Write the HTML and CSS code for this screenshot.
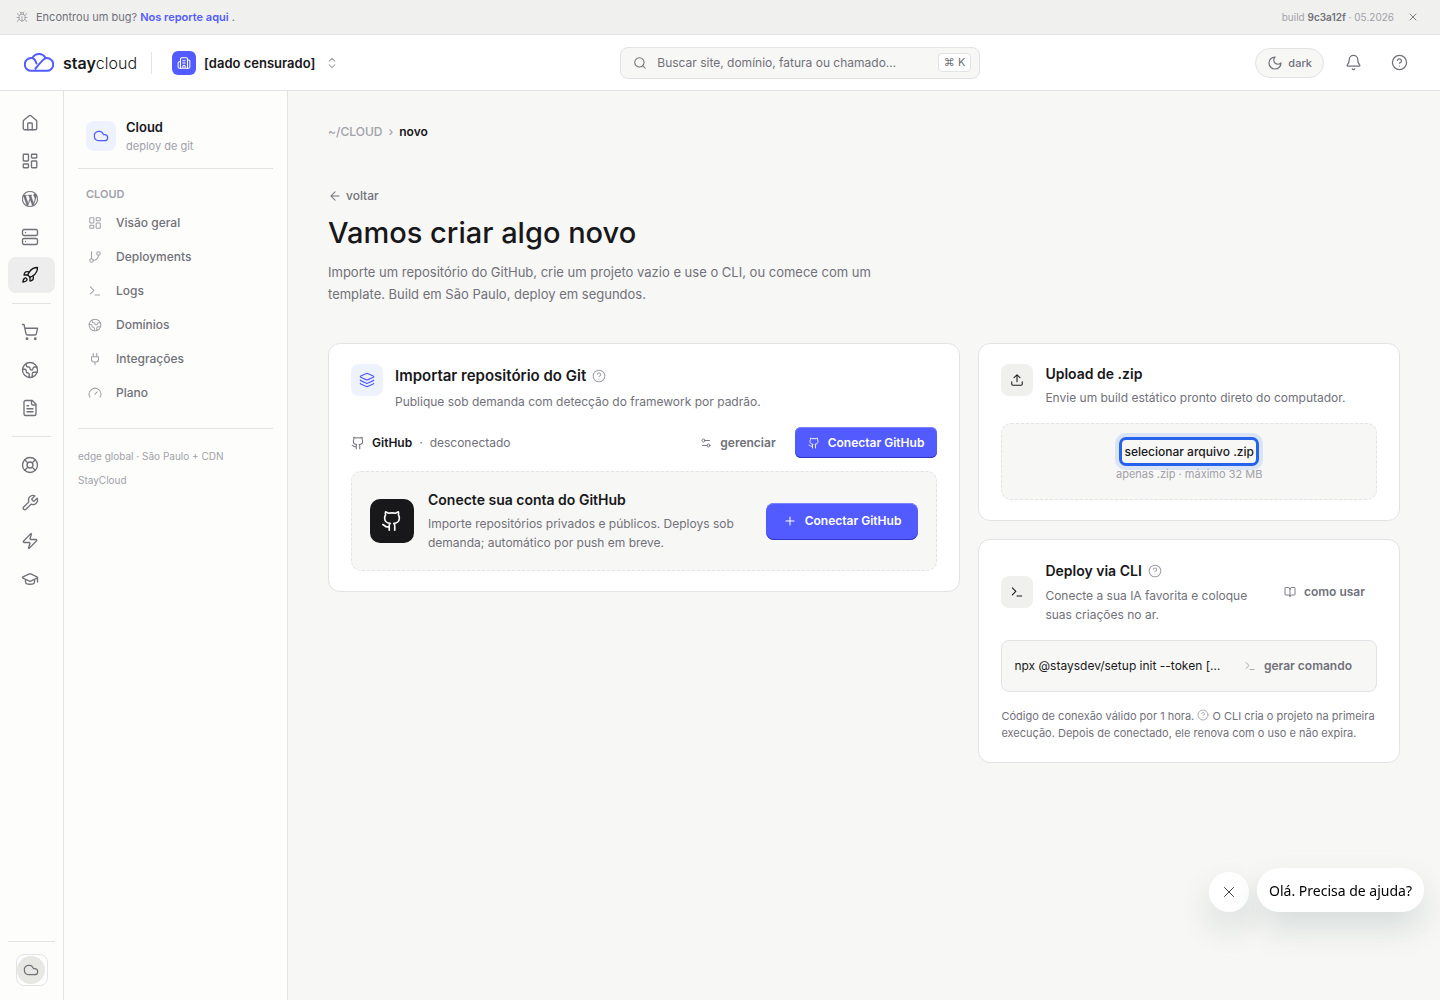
FILE: index.html
```html
<!DOCTYPE html>
<html lang="pt-BR">
	<head>
		<meta charset="UTF-8">
		<meta name="viewport" content="width=device-width, initial-scale=1.0">
		<title>StayCloud</title>
		<link rel="stylesheet" href="styles.css">
	</head>
	<body>
		<!-- icon sprite -->
		<svg class="sprite" aria-hidden="true">
			<symbol id="i-bug" viewBox="0 0 24 24"><path d="m8 2 1.88 1.88M14.12 3.88 16 2M9 7.13v-1a3.003 3.003 0 1 1 6 0v1"/><path d="M12 20c-3.3 0-6-2.7-6-6v-3a4 4 0 0 1 4-4h4a4 4 0 0 1 4 4v3c0 3.3-2.7 6-6 6M12 20v-9M6.53 9C4.6 8.8 3 7.1 3 5M6 13H2M3 21c0-2.1 1.7-3.9 3.8-4M20.97 5c0 2.1-1.6 3.8-3.5 4M22 13h-4M17.2 17c2.1.1 3.8 1.9 3.8 4"/></symbol>
			<symbol id="i-x" viewBox="0 0 24 24"><path d="M18 6 6 18M6 6l12 12"/></symbol>
			<symbol id="i-building" viewBox="0 0 24 24"><path d="M10 12h4M10 8h4M14 21v-3a2 2 0 0 0-4 0v3M6 10H4a2 2 0 0 0-2 2v7a2 2 0 0 0 2 2h16a2 2 0 0 0 2-2V9a2 2 0 0 0-2-2h-2"/><path d="M6 21V5a2 2 0 0 1 2-2h8a2 2 0 0 1 2 2v16"/></symbol>
			<symbol id="i-updown" viewBox="0 0 24 24"><path d="m7 15 5 5 5-5M7 9l5-5 5 5"/></symbol>
			<symbol id="i-search" viewBox="0 0 24 24"><circle cx="11" cy="11" r="8"/><path d="m21 21-4.34-4.34"/></symbol>
			<symbol id="i-moon" viewBox="0 0 24 24"><path d="M12 3a6 6 0 0 0 9 9 9 9 0 1 1-9-9"/></symbol>
			<symbol id="i-bell" viewBox="0 0 24 24"><path d="M10.268 21a2 2 0 0 0 3.464 0M3.262 15.326A1 1 0 0 0 4 17h16a1 1 0 0 0 .74-1.673C19.41 13.956 18 12.499 18 8A6 6 0 0 0 6 8c0 4.499-1.411 5.956-2.738 7.326"/></symbol>
			<symbol id="i-help" viewBox="0 0 24 24"><circle cx="12" cy="12" r="10"/><path d="M9.09 9a3 3 0 0 1 5.83 1c0 2-3 3-3 3M12 17h.01"/></symbol>
			<symbol id="i-home" viewBox="0 0 24 24"><path d="M15 21v-8a1 1 0 0 0-1-1h-4a1 1 0 0 0-1 1v8"/><path d="M3 10a2 2 0 0 1 .709-1.528l7-6a2 2 0 0 1 2.582 0l7 6A2 2 0 0 1 21 10v9a2 2 0 0 1-2 2H5a2 2 0 0 1-2-2z"/></symbol>
			<symbol id="i-dash" viewBox="0 0 24 24"><rect width="7" height="9" x="3" y="3" rx="1"/><rect width="7" height="5" x="14" y="3" rx="1"/><rect width="7" height="9" x="14" y="12" rx="1"/><rect width="7" height="5" x="3" y="16" rx="1"/></symbol>
			<symbol id="i-wp" viewBox="0 0 24 24"><path fill="currentColor" stroke="currentColor" stroke-width=".5" d="M21.469 6.825c.84 1.537 1.318 3.3 1.318 5.175 0 3.979-2.156 7.456-5.363 9.325l3.295-9.527c.615-1.54.82-2.771.82-3.864 0-.405-.026-.78-.07-1.11m-7.981.105c.647-.03 1.232-.105 1.232-.105.582-.075.514-.93-.067-.899 0 0-1.755.135-2.88.135-1.064 0-2.85-.15-2.85-.15-.585-.03-.661.855-.075.885 0 0 .54.061 1.125.09l1.68 4.605-2.37 7.08L5.354 6.9c.649-.03 1.234-.1 1.234-.1.585-.075.516-.93-.065-.896 0 0-1.746.138-2.874.138-.2 0-.438-.008-.69-.015C4.911 3.15 8.235 1.215 12 1.215c2.809 0 5.365 1.072 7.286 2.833-.046-.003-.091-.009-.141-.009-1.06 0-1.812.923-1.812 1.914 0 .89.513 1.643 1.06 2.531.411.72.89 1.643.89 2.977 0 .915-.354 1.994-.821 3.479l-1.075 3.585-3.9-11.61.001.014zM12 22.784c-1.059 0-2.081-.153-3.048-.437l3.237-9.406 3.315 9.087c.024.053.05.101.078.149-1.12.393-2.325.609-3.582.609M1.211 12c0-1.564.336-3.05.935-4.39L7.29 21.709C3.694 19.96 1.212 16.271 1.211 12M12 0C5.385 0 0 5.385 0 12s5.385 12 12 12 12-5.385 12-12S18.615 0 12 0"/></symbol>
			<symbol id="i-server" viewBox="0 0 24 24"><rect width="20" height="8" x="2" y="2" rx="2"/><rect width="20" height="8" x="2" y="14" rx="2"/><path d="M6 6h.01M6 18h.01"/></symbol>
			<symbol id="i-rocket" viewBox="0 0 24 24"><path d="M4.5 16.5c-1.5 1.26-2 5-2 5s3.74-.5 5-2c.71-.84.7-2.13-.09-2.91a2.18 2.18 0 0 0-2.91-.09zM12 15l-3-3a22 22 0 0 1 2-3.95A12.88 12.88 0 0 1 22 2c0 2.72-.78 7.5-6 11a22.35 22.35 0 0 1-4 2z"/><path d="M9 12H4s.55-3.03 2-4c1.62-1.08 5 0 5 0M12 15v5s3.03-.55 4-2c1.08-1.62 0-5 0-5"/></symbol>
			<symbol id="i-cart" viewBox="0 0 24 24"><circle cx="8" cy="21" r="1"/><circle cx="19" cy="21" r="1"/><path d="M2.05 2.05h2l2.66 12.42a2 2 0 0 0 2 1.58h9.78a2 2 0 0 0 1.95-1.57l1.65-7.43H5.12"/></symbol>
			<symbol id="i-earth" viewBox="0 0 24 24"><path d="M21.54 15H17a2 2 0 0 0-2 2v4.54M7 3.34V5a3 3 0 0 0 3 3 2 2 0 0 1 2 2c0 1.1.9 2 2 2a2 2 0 0 0 2-2c0-1.1.9-2 2-2h3.17M11 21.95V18a2 2 0 0 0-2-2 2 2 0 0 1-2-2v-1a2 2 0 0 0-2-2H2.05"/><circle cx="12" cy="12" r="10"/></symbol>
			<symbol id="i-file" viewBox="0 0 24 24"><path d="M15 2H6a2 2 0 0 0-2 2v16a2 2 0 0 0 2 2h12a2 2 0 0 0 2-2V7Z"/><path d="M14 2v4a2 2 0 0 0 2 2h4M10 9H8M16 13H8M16 17H8"/></symbol>
			<symbol id="i-buoy" viewBox="0 0 24 24"><circle cx="12" cy="12" r="10"/><path d="m4.93 4.93 4.24 4.24M14.83 9.17l4.24-4.24M14.83 14.83l4.24 4.24M9.17 14.83l-4.24 4.24"/><circle cx="12" cy="12" r="4"/></symbol>
			<symbol id="i-wrench" viewBox="0 0 24 24"><path d="M14.7 6.3a1 1 0 0 0 0 1.4l1.6 1.6a1 1 0 0 0 1.4 0l3.77-3.77a6 6 0 0 1-7.94 7.94l-6.91 6.91a2.12 2.12 0 0 1-3-3l6.91-6.91a6 6 0 0 1 7.94-7.94l-3.76 3.76z"/></symbol>
			<symbol id="i-zap" viewBox="0 0 24 24"><path d="M4 14a1 1 0 0 1-.78-1.63l9.9-10.2a.5.5 0 0 1 .86.46l-1.92 6.02A1 1 0 0 0 13 10h7a1 1 0 0 1 .78 1.63l-9.9 10.2a.5.5 0 0 1-.86-.46l1.92-6.02A1 1 0 0 0 11 14z"/></symbol>
			<symbol id="i-grad" viewBox="0 0 24 24"><path d="M21.42 10.922a1 1 0 0 0-.019-1.838L12.83 5.18a2 2 0 0 0-1.66 0L2.6 9.08a1 1 0 0 0 0 1.832l8.57 3.908a2 2 0 0 0 1.66 0zM22 10v6M6 12.5V16a6 3 0 0 0 12 0v-3.5"/></symbol>
			<symbol id="i-cloud" viewBox="0 0 24 24"><path d="M17.5 19H9a7 7 0 1 1 6.71-9h1.79a4.5 4.5 0 1 1 0 9Z"/></symbol>
			<symbol id="i-branch" viewBox="0 0 24 24"><path d="M6 3v12"/><circle cx="18" cy="6" r="3"/><circle cx="6" cy="18" r="3"/><path d="M18 9a9 9 0 0 1-9 9"/></symbol>
			<symbol id="i-term" viewBox="0 0 24 24"><path d="M12 19h8M4 17l6-6-6-6"/></symbol>
			<symbol id="i-plug" viewBox="0 0 24 24"><path d="M12 22v-5M9 8V2M15 8V2M18 8v5a4 4 0 0 1-4 4h-4a4 4 0 0 1-4-4V8Z"/></symbol>
			<symbol id="i-gauge" viewBox="0 0 24 24"><path d="m12 14 4-4M3.34 19a10 10 0 1 1 17.32 0"/></symbol>
			<symbol id="i-left" viewBox="0 0 24 24"><path d="m12 19-7-7 7-7M19 12H5"/></symbol>
			<symbol id="i-layers" viewBox="0 0 24 24"><path d="M12.83 2.18a2 2 0 0 0-1.66 0L2.6 6.08a1 1 0 0 0 0 1.83l8.58 3.91a2 2 0 0 0 1.66 0l8.58-3.9a1 1 0 0 0 0-1.83zM2 12a1 1 0 0 0 .58.91l8.6 3.91a2 2 0 0 0 1.65 0l8.58-3.9A1 1 0 0 0 22 12M2 17a1 1 0 0 0 .58.91l8.6 3.91a2 2 0 0 0 1.65 0l8.58-3.9A1 1 0 0 0 22 17"/></symbol>
			<symbol id="i-github" viewBox="0 0 24 24"><path d="M15 22v-4a4.8 4.8 0 0 0-1-3.5c3 0 6-2 6-5.5.08-1.25-.27-2.48-1-3.5.28-1.15.28-2.35 0-3.5 0 0-1 0-3 1.5-2.64-.5-5.36-.5-8 0C6 2 5 2 5 2c-.3 1.15-.3 2.35 0 3.5A5.403 5.403 0 0 0 4 9c0 3.5 3 5.5 6 5.5-.39.49-.68 1.05-.85 1.65S8.93 17.38 9 18v4M9 18c-4.51 2-5-2-7-2"/></symbol>
			<symbol id="i-sliders" viewBox="0 0 24 24"><path d="M14 17H5M19 7h-9"/><circle cx="17" cy="17" r="3"/><circle cx="7" cy="7" r="3"/></symbol>
			<symbol id="i-plus" viewBox="0 0 24 24"><path d="M5 12h14M12 5v14"/></symbol>
			<symbol id="i-upload" viewBox="0 0 24 24"><path d="M12 3v12M17 8l-5-5-5 5M21 15v4a2 2 0 0 1-2 2H5a2 2 0 0 1-2-2v-4"/></symbol>
			<symbol id="i-book" viewBox="0 0 24 24"><path d="M12 7v14M3 18a1 1 0 0 1-1-1V4a1 1 0 0 1 1-1h5a4 4 0 0 1 4 4 4 4 0 0 1 4-4h5a1 1 0 0 1 1 1v13a1 1 0 0 1-1 1h-6a3 3 0 0 0-3 3 3 3 0 0 0-3-3z"/></symbol>
		</svg>

		<div class="banner">
			<svg class="icon s12 faint"><use href="#i-bug"/></svg>
			<p>Encontrou um bug? <a href="#">Nos reporte aqui</a> .</p>
			<span class="build">build <b>9c3a12f</b> · 05.2026</span>
			<button class="plain" aria-label="Fechar"><svg class="icon s12"><use href="#i-x"/></svg></button>
		</div>

		<header class="header">
			<div class="header-left">
				<a class="logo" href="#">
					<svg class="logo-mark" viewBox="0 0 30 19"><path d="M12.500 10.500C11.500 7 10 5 7.200 5a6.400 6.400 0 0 0 0 12.800H22.800a6.400 6.400 0 0 0 0-12.800C20.500 5 19 6.500 11.500 15.500M8.500 5C10 2 12.300 1 15 1s5 1 6.500 4"/></svg>
					<span><b>stay</b>cloud</span>
				</a>
				<button class="team plain">
					<span class="team-icon"><svg class="icon s14"><use href="#i-building"/></svg></span>
					[dado censurado]
					<svg class="icon s14 faint"><use href="#i-updown"/></svg>
				</button>
			</div>
			<label class="search">
				<svg class="icon s14"><use href="#i-search"/></svg>
				<input type="text" aria-label="Buscar" placeholder="Buscar site, domínio, fatura ou chamado…">
				<kbd>⌘ K</kbd>
			</label>
			<div class="header-right">
				<button class="theme"><svg class="icon s16"><use href="#i-moon"/></svg>dark</button>
				<button class="round plain" aria-label="Notificações"><svg class="icon s17"><use href="#i-bell"/></svg></button>
				<button class="round plain" aria-label="Ajuda"><svg class="icon s17"><use href="#i-help"/></svg></button>
			</div>
		</header>

		<div class="shell">
			<nav class="rail" aria-label="Principal">
				<a href="#" aria-label="Início"><svg class="icon s18"><use href="#i-home"/></svg></a>
				<a href="#" aria-label="Painel"><svg class="icon s18"><use href="#i-dash"/></svg></a>
				<a href="#" aria-label="WordPress"><svg class="icon s16"><use href="#i-wp"/></svg></a>
				<a href="#" aria-label="Servidores"><svg class="icon s18"><use href="#i-server"/></svg></a>
				<a href="#" class="active" aria-label="Cloud"><svg class="icon s18"><use href="#i-rocket"/></svg></a>
				<hr>
				<a href="#" aria-label="Loja"><svg class="icon s18"><use href="#i-cart"/></svg></a>
				<a href="#" aria-label="Domínios"><svg class="icon s18"><use href="#i-earth"/></svg></a>
				<a href="#" aria-label="Faturas"><svg class="icon s18"><use href="#i-file"/></svg></a>
				<hr>
				<a href="#" aria-label="Suporte"><svg class="icon s18"><use href="#i-buoy"/></svg></a>
				<a href="#" aria-label="Ferramentas"><svg class="icon s18"><use href="#i-wrench"/></svg></a>
				<a href="#" aria-label="Automação"><svg class="icon s18"><use href="#i-zap"/></svg></a>
				<a href="#" aria-label="Academia"><svg class="icon s18"><use href="#i-grad"/></svg></a>
				<div class="rail-foot">
					<button class="avatar" aria-label="Conta"><span><svg class="icon s16"><use href="#i-cloud"/></svg></span></button>
				</div>
			</nav>

			<aside class="side">
				<div class="side-head">
					<span class="tile blue s30"><svg class="icon s16"><use href="#i-cloud"/></svg></span>
					<div>
						<strong>Cloud</strong>
						<small>deploy de git</small>
					</div>
				</div>
				<nav class="side-nav" aria-label="Cloud">
					<h2>CLOUD</h2>
					<a href="#"><svg class="icon s14"><use href="#i-dash"/></svg>Visão geral</a>
					<a href="#"><svg class="icon s14"><use href="#i-branch"/></svg>Deployments</a>
					<a href="#"><svg class="icon s14"><use href="#i-term"/></svg>Logs</a>
					<a href="#"><svg class="icon s14"><use href="#i-earth"/></svg>Domínios</a>
					<a href="#"><svg class="icon s14"><use href="#i-plug"/></svg>Integrações</a>
					<a href="#"><svg class="icon s14"><use href="#i-gauge"/></svg>Plano</a>
				</nav>
				<div class="side-foot">
					<p>edge global · São Paulo + CDN</p>
					<p>StayCloud</p>
				</div>
			</aside>

			<main class="main">
				<div class="crumbs"><a href="#">~/CLOUD</a><span>›</span><b>novo</b></div>
				<a class="back" href="#"><svg class="icon s14"><use href="#i-left"/></svg>voltar</a>
				<h1>Vamos criar algo novo</h1>
				<p class="lead">Importe um repositório do GitHub, crie um projeto vazio e use o CLI, ou comece com um template. Build em São Paulo, deploy em segundos.</p>

				<div class="grid">
					<section class="card">
						<div class="card-head">
							<span class="tile blue"><svg class="icon s16"><use href="#i-layers"/></svg></span>
							<div class="card-text">
								<h2 class="big">Importar repositório do Git <svg class="icon s14 faint"><use href="#i-help"/></svg></h2>
								<p>Publique sob demanda com detecção do framework por padrão.</p>
							</div>
						</div>
						<div class="provider">
							<svg class="icon s14"><use href="#i-github"/></svg>
							<b>GitHub</b><i>·</i><span>desconectado</span>
							<button class="ghost"><svg class="icon s12"><use href="#i-sliders"/></svg>gerenciar</button>
							<button class="primary small"><svg class="icon s12"><use href="#i-github"/></svg>Conectar GitHub</button>
						</div>
						<div class="connect dashed">
							<span class="gh-tile"><svg class="icon s22"><use href="#i-github"/></svg></span>
							<div class="card-text">
								<h2>Conecte sua conta do GitHub</h2>
								<p>Importe repositórios privados e públicos. Deploys sob demanda; automático por push em breve.</p>
							</div>
							<button class="primary"><svg class="icon s14"><use href="#i-plus"/></svg>Conectar GitHub</button>
						</div>
					</section>

					<div class="stack">
						<section class="card">
							<div class="card-head">
								<span class="tile"><svg class="icon s14"><use href="#i-upload"/></svg></span>
								<div class="card-text">
									<h2>Upload de .zip</h2>
									<p>Envie um build estático pronto direto do computador.</p>
								</div>
							</div>
							<div class="drop dashed">
								<button class="pick">selecionar arquivo .zip</button>
								<small>apenas .zip · máximo 32 MB</small>
							</div>
						</section>

						<section class="card">
							<div class="card-head center">
								<span class="tile"><svg class="icon s14"><use href="#i-term"/></svg></span>
								<div class="card-text">
									<h2>Deploy via CLI <svg class="icon s14 faint"><use href="#i-help"/></svg></h2>
									<p>Conecte a sua IA favorita e coloque suas criações no ar.</p>
								</div>
								<button class="ghost"><svg class="icon s12"><use href="#i-book"/></svg>como usar</button>
							</div>
							<div class="command">
								<code>npx @staysdev/setup init --token […</code>
								<button class="ghost"><svg class="icon s12 faint"><use href="#i-term"/></svg>gerar comando</button>
							</div>
							<p class="note">Código de conexão válido por 1 hora. <svg class="icon s12 faint"><use href="#i-help"/></svg> O CLI cria o projeto na primeira execução. Depois de conectado, ele renova com o uso e não expira.</p>
						</section>
					</div>
				</div>
			</main>
		</div>

		<div class="chat">
			<button class="chat-close" aria-label="Fechar chat"><svg class="icon s18"><use href="#i-x"/></svg></button>
			<button class="chat-msg">Olá. Precisa de ajuda?</button>
		</div>
	</body>
</html>
```
FILE: styles.css
```css
* {
	margin: 0;
	padding: 0;
	box-sizing: border-box;
}

:root {
	--ink: #18181b;
	--muted: #71717a;
	--faint: #a1a1aa;
	--line: #e2e3e5;
	--bg: #f7f7f5;
	--panel: #fdfdfb;
	--soft: #f0f0ee;
	--accent: #525bff;
}

body {
	min-height: 100vh;
	display: flex;
	flex-direction: column;
	background-color: var(--bg);
	color: var(--ink);
	font: 12px/18px Inter, "Liberation Sans", sans-serif;
}

a {
	color: inherit;
	text-decoration: none;
}

button {
	font: inherit;
	color: inherit;
	cursor: pointer;
	border: 0;
	background: none;
}

.sprite {
	display: none;
}

.icon {
	flex: none;
	fill: none;
	stroke: currentColor;
	stroke-width: 1.8;
	stroke-linecap: round;
	stroke-linejoin: round;
}

.s12 { width: 12px; height: 12px; }
.s14 { width: 14px; height: 14px; }
.s16 { width: 16px; height: 16px; }
.s17 { width: 17px; height: 17px; }
.s18 { width: 18px; height: 18px; }
.s22 { width: 22px; height: 22px; }

.faint {
	color: var(--faint);
}

.plain {
	display: flex;
	align-items: center;
}

/* top banner */
.banner {
	height: 35px;
	padding: 0 21px 0 16px;
	display: flex;
	align-items: center;
	gap: 8px;
	background-color: var(--soft);
	border-bottom: 1px solid var(--line);
	font-size: 11px;
	color: var(--muted);
}

.banner a {
	color: var(--accent);
	font-weight: 600;
}

.build {
	margin-left: auto;
	font-size: 10px;
	color: var(--faint);
}

.build b {
	color: var(--muted);
	font-weight: 600;
}

.banner button {
	margin-left: 5px;
}

/* header */
.header {
	height: 56px;
	padding: 0 24px;
	display: flex;
	align-items: center;
	justify-content: space-between;
	background-color: #fff;
	border-bottom: 1px solid var(--line);
}

.header-left,
.header-right {
	display: flex;
	align-items: center;
}

.logo {
	display: flex;
	align-items: center;
	gap: 9px;
	height: 22px;
	padding-right: 14px;
	border-right: 1px solid var(--line);
	font-size: 16px;
}

.logo b {
	font-weight: 600;
}

.logo span {
	font-weight: 300;
}

.logo-mark {
	width: 30px;
	height: 19px;
	fill: none;
	stroke: var(--accent);
	stroke-width: 2;
	stroke-linecap: round;
}

.team {
	margin-left: 20px;
	padding-right: 6px;
	gap: 8px;
	font-size: 13px;
	font-weight: 600;
}

.team .faint {
	margin-left: 2px;
}

.team-icon {
	width: 24px;
	height: 24px;
	border-radius: 6px;
	display: grid;
	place-items: center;
	background-color: var(--accent);
	color: #fff;
}

.search {
	width: 360px;
	height: 32px;
	padding: 0 8px 0 12px;
	display: flex;
	align-items: center;
	gap: 10px;
	border: 1px solid var(--line);
	border-radius: 8px;
	background-color: var(--bg);
	color: var(--muted);
}

.search input {
	flex: 1;
	min-width: 0;
	border: 0;
	outline: 0;
	background: none;
	font: inherit;
	font-size: 12px;
}

.search input::placeholder {
	color: var(--muted);
}

.search kbd {
	padding: 0 5px;
	border: 1px solid var(--line);
	border-radius: 4px;
	background-color: #fff;
	font: inherit;
	font-size: 11px;
	line-height: 17px;
}

.header-right {
	gap: 14px;
	color: var(--muted);
}

.theme {
	height: 30px;
	padding: 0 11px;
	display: flex;
	align-items: center;
	gap: 5px;
	border: 1px solid var(--line);
	border-radius: 15px;
	background-color: var(--bg);
	font-size: 11px;
	font-weight: 500;
}

.round {
	width: 32px;
	height: 32px;
	justify-content: center;
}

/* shell */
.shell {
	flex: 1;
	display: flex;
}

.rail {
	width: 64px;
	padding: 14px 8px;
	display: flex;
	flex-direction: column;
	gap: 2px;
	background-color: var(--panel);
	border-right: 1px solid var(--line);
	color: var(--muted);
}

.rail a {
	height: 36px;
	padding-right: 3px;
	display: grid;
	place-items: center;
	border-radius: 8px;
}

.rail a.active {
	background-color: #ededed;
	color: var(--ink);
}

.rail hr {
	margin: 8px 4px;
	border: 0;
	border-top: 1px solid var(--line);
}

.rail-foot {
	margin-top: auto;
	padding: 12px 8px 0;
	border-top: 1px solid var(--line);
}

.avatar {
	width: 32px;
	height: 32px;
	padding: 1px 2px 1px 0;
	border: 1px solid var(--line);
	border-radius: 8px;
	background-color: #fff;
}

.avatar span {
	width: 28px;
	height: 28px;
	border-radius: 14px;
	display: grid;
	place-items: center;
	background-color: #e7e7e3;
	color: var(--muted);
}

.side {
	width: 224px;
	padding: 26px 14px;
	background-color: var(--panel);
	border-right: 1px solid var(--line);
}

.side-head {
	padding: 0 8px 13px;
	display: flex;
	align-items: center;
	gap: 10px;
	border-bottom: 1px solid var(--line);
}

.side-head strong,
.side-head small {
	display: block;
}

.side-head strong {
	font-size: 13px;
	font-weight: 600;
	line-height: 20px;
}

.side-head small {
	font-size: 11px;
	line-height: 18px;
	color: var(--faint);
}

.tile {
	width: 32px;
	height: 32px;
	flex: none;
	display: grid;
	place-items: center;
	border-radius: 8px;
	background-color: var(--soft);
}

.tile.blue {
	background-color: #eef2ff;
	color: var(--accent);
}

.tile.s30 {
	width: 30px;
	height: 30px;
}

.side-nav {
	padding: 16px 8px 18px;
	border-bottom: 1px solid var(--line);
}

.side-nav h2 {
	margin-bottom: 3px;
	font-size: 11px;
	line-height: 18px;
	font-weight: 600;
	color: var(--faint);
}

.side-nav a {
	height: 34px;
	padding-left: 2px;
	display: flex;
	align-items: center;
	gap: 14px;
	font-size: 12px;
	font-weight: 500;
	color: var(--muted);
}

.side-nav .icon {
	color: var(--faint);
}

.side-foot {
	padding-top: 15px;
	font-size: 10px;
	line-height: 24px;
	color: var(--faint);
}

/* content */
.main {
	flex: 1;
	min-width: 0;
	padding: 32px 40px;
}

.crumbs {
	display: flex;
	gap: 6px;
	color: var(--faint);
	font-weight: 500;
}

.crumbs b {
	color: var(--ink);
	font-weight: 600;
}

.back {
	width: fit-content;
	margin-top: 46px;
	display: flex;
	align-items: center;
	gap: 4px;
	font-size: 12px;
	font-weight: 500;
	color: var(--muted);
}

h1 {
	margin-top: 8px;
	font-size: 29px;
	line-height: 40px;
	font-weight: 500;
}

.lead {
	max-width: 580px;
	margin: 8px 0 38px;
	font-size: 13px;
	line-height: 22px;
	color: var(--muted);
}

.grid {
	display: grid;
	grid-template-columns: 3fr 2fr;
	align-items: start;
	gap: 18px;
}

.stack {
	display: grid;
	gap: 18px;
}

.card {
	padding: 20px 22px;
	background-color: #fff;
	border: 1px solid var(--line);
	border-radius: 12px;
}

.card-head {
	display: flex;
	gap: 12px;
}

.card-head.center {
	align-items: center;
}

.card-text {
	flex: 1;
	min-width: 0;
}

.card-text h2 {
	display: flex;
	align-items: center;
	gap: 6px;
	font-size: 14px;
	line-height: 20px;
	font-weight: 600;
}

.card-head.center h2 {
	line-height: 22px;
}

.card-text h2.big {
	font-size: 15px;
	line-height: 24px;
}

.card-text p {
	margin-top: 4px;
	font-size: 12px;
	line-height: 19px;
	color: var(--muted);
}

.provider {
	margin: 16px 0 13px;
	display: flex;
	align-items: center;
	gap: 7px;
	font-size: 12px;
	color: var(--muted);
}

.provider b {
	color: var(--ink);
	font-weight: 600;
}

.provider .ghost {
	margin-left: auto;
}

.ghost {
	padding: 6px 12px;
	display: flex;
	align-items: center;
	gap: 8px;
	font-size: 12px;
	font-weight: 600;
	color: var(--muted);
}

.primary {
	height: 37px;
	padding: 0 17px;
	display: flex;
	align-items: center;
	gap: 8px;
	border-radius: 8px;
	background-color: var(--accent);
	box-shadow: inset 0 1px 0 #7c83ff, inset 0 -1px 0 #2f35c8;
	color: #fff;
	font-size: 12px;
	font-weight: 600;
}

.primary.small {
	height: 31px;
	padding: 0 13px;
	border-radius: 6px;
}

.dashed {
	border: 1px dashed var(--line);
	border-radius: 10px;
	background-color: var(--bg);
}

.connect {
	padding: 18px;
	display: flex;
	align-items: center;
	gap: 14px;
}

.gh-tile {
	width: 44px;
	height: 44px;
	flex: none;
	display: grid;
	place-items: center;
	border-radius: 10px;
	background-color: var(--ink);
	color: #fff;
}

.drop {
	height: 77px;
	margin-top: 16px;
	padding-top: 16px;
	display: flex;
	flex-direction: column;
	align-items: center;
}

.pick {
	padding: 1px 2px;
	border-radius: 4px;
	outline: 3px solid #2563eb;
	box-shadow: 0 0 0 7px #dbe4f6;
	font-size: 12px;
	line-height: 21px;
	font-weight: 500;
}

.drop small {
	margin-top: 2px;
	font-size: 11px;
	line-height: 18px;
	color: var(--faint);
	z-index: 1;
}

.command {
	height: 52px;
	margin: 16px 0;
	padding: 0 12px;
	display: flex;
	align-items: center;
	justify-content: space-between;
	border: 1px solid var(--line);
	border-radius: 8px;
	background-color: var(--bg);
}

.command code {
	font: inherit;
	white-space: nowrap;
}

.note {
	font-size: 11px;
	line-height: 17px;
	color: var(--muted);
}

.note .icon {
	vertical-align: -1px;
}

/* chat widget floats over the page */
.chat {
	position: fixed;
	right: 16px;
	bottom: 88px;
	display: flex;
	align-items: flex-end;
	gap: 8px;
}

.chat button {
	background-color: #fff;
	box-shadow: 0 16px 32px rgba(20, 70, 70, .14);
	color: #000;
}

.chat-close {
	width: 40px;
	height: 40px;
	display: grid;
	place-items: center;
	border-radius: 20px;
}

.chat-close .icon {
	stroke-width: 1;
}

.chat .chat-msg {
	height: 44px;
	padding: 0 12px;
	border-radius: 22px;
	font: 14px "Noto Sans", sans-serif;
}
```
